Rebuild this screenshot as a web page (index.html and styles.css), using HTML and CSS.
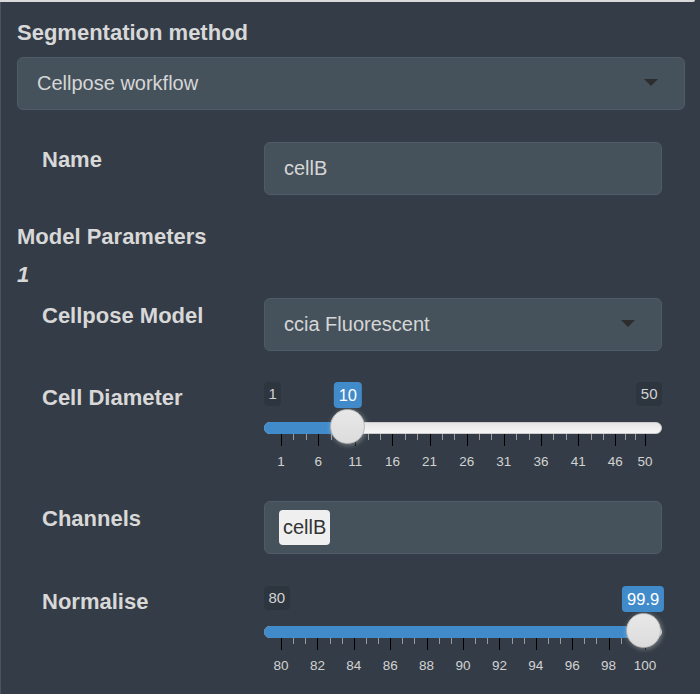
FILE: index.html
```html
<!DOCTYPE html>
<html lang="en">
<head>
<meta charset="utf-8">
<title>Segmentation method</title>
<link rel="stylesheet" href="styles.css">
</head>
<body>
<div class="topbar"></div>
<main class="panel">
  <div class="title">Segmentation method</div>
  <div class="select select-wide"><span>Cellpose workflow</span><span class="caret"></span></div>

  <div class="field field-name">
    <label class="field-label">Name</label>
    <div class="input"><span>cellB</span></div>
  </div>

  <div class="subtitle">Model Parameters</div>
  <div class="index">1</div>

  <div class="field field-model">
    <label class="field-label">Cellpose Model</label>
    <div class="select"><span>ccia Fluorescent</span><span class="caret"></span></div>
  </div>

  <div class="field field-gap">
    <label class="field-label">Cell Diameter</label>
    <div class="slider">
      <span class="irs-min">1</span>
      <span class="irs-max">50</span>
      <div class="irs-line"></div>
      <div class="irs-bar" style="width:83.86px"></div>
      <div class="rail">
        <i class="tick" style="left:0%"></i>
        <i class="tick minor" style="left:3.401%"></i>
        <i class="tick minor" style="left:6.803%"></i>
        <i class="tick" style="left:10.204%"></i>
        <i class="tick minor" style="left:13.605%"></i>
        <i class="tick minor" style="left:17.007%"></i>
        <i class="tick" style="left:20.408%"></i>
        <i class="tick minor" style="left:23.810%"></i>
        <i class="tick minor" style="left:27.211%"></i>
        <i class="tick" style="left:30.612%"></i>
        <i class="tick minor" style="left:34.014%"></i>
        <i class="tick minor" style="left:37.415%"></i>
        <i class="tick" style="left:40.816%"></i>
        <i class="tick minor" style="left:44.218%"></i>
        <i class="tick minor" style="left:47.619%"></i>
        <i class="tick" style="left:51.020%"></i>
        <i class="tick minor" style="left:54.422%"></i>
        <i class="tick minor" style="left:57.823%"></i>
        <i class="tick" style="left:61.224%"></i>
        <i class="tick minor" style="left:64.626%"></i>
        <i class="tick minor" style="left:68.027%"></i>
        <i class="tick" style="left:71.429%"></i>
        <i class="tick minor" style="left:74.830%"></i>
        <i class="tick minor" style="left:78.231%"></i>
        <i class="tick" style="left:81.633%"></i>
        <i class="tick minor" style="left:85.034%"></i>
        <i class="tick minor" style="left:88.435%"></i>
        <i class="tick" style="left:91.837%"></i>
        <i class="tick minor" style="left:94.558%"></i>
        <i class="tick minor" style="left:97.279%"></i>
        <i class="tick" style="left:100%"></i>
        <span class="tick-label" style="left:0%">1</span>
        <span class="tick-label" style="left:10.204%">6</span>
        <span class="tick-label" style="left:20.408%">11</span>
        <span class="tick-label" style="left:30.612%">16</span>
        <span class="tick-label" style="left:40.816%">21</span>
        <span class="tick-label" style="left:51.020%">26</span>
        <span class="tick-label" style="left:61.224%">31</span>
        <span class="tick-label" style="left:71.429%">36</span>
        <span class="tick-label" style="left:81.633%">41</span>
        <span class="tick-label" style="left:91.837%">46</span>
        <span class="tick-label" style="left:100%">50</span>
        <span class="handle" style="left:18.367%"></span>
        <span class="irs-single" style="left:18.367%">10</span>
      </div>
    </div>
  </div>

  <div class="field field-gap">
    <label class="field-label">Channels</label>
    <div class="input input-chips"><span class="chip">cellB</span></div>
  </div>

  <div class="field field-gap-last">
    <label class="field-label">Normalise</label>
    <div class="slider">
      <span class="irs-min">80</span>
      <div class="irs-line"></div>
      <div class="irs-bar" style="width:379.18px"></div>
      <div class="rail">
        <i class="tick" style="left:0%"></i>
        <i class="tick minor" style="left:3.333%"></i>
        <i class="tick minor" style="left:6.667%"></i>
        <i class="tick" style="left:10%"></i>
        <i class="tick minor" style="left:13.333%"></i>
        <i class="tick minor" style="left:16.667%"></i>
        <i class="tick" style="left:20%"></i>
        <i class="tick minor" style="left:23.333%"></i>
        <i class="tick minor" style="left:26.667%"></i>
        <i class="tick" style="left:30%"></i>
        <i class="tick minor" style="left:33.333%"></i>
        <i class="tick minor" style="left:36.667%"></i>
        <i class="tick" style="left:40%"></i>
        <i class="tick minor" style="left:43.333%"></i>
        <i class="tick minor" style="left:46.667%"></i>
        <i class="tick" style="left:50%"></i>
        <i class="tick minor" style="left:53.333%"></i>
        <i class="tick minor" style="left:56.667%"></i>
        <i class="tick" style="left:60%"></i>
        <i class="tick minor" style="left:63.333%"></i>
        <i class="tick minor" style="left:66.667%"></i>
        <i class="tick" style="left:70%"></i>
        <i class="tick minor" style="left:73.333%"></i>
        <i class="tick minor" style="left:76.667%"></i>
        <i class="tick" style="left:80%"></i>
        <i class="tick minor" style="left:83.333%"></i>
        <i class="tick minor" style="left:86.667%"></i>
        <i class="tick" style="left:90%"></i>
        <i class="tick minor" style="left:93.333%"></i>
        <i class="tick minor" style="left:96.667%"></i>
        <i class="tick" style="left:100%"></i>
        <span class="tick-label" style="left:0%">80</span>
        <span class="tick-label" style="left:10%">82</span>
        <span class="tick-label" style="left:20%">84</span>
        <span class="tick-label" style="left:30%">86</span>
        <span class="tick-label" style="left:40%">88</span>
        <span class="tick-label" style="left:50%">90</span>
        <span class="tick-label" style="left:60%">92</span>
        <span class="tick-label" style="left:70%">94</span>
        <span class="tick-label" style="left:80%">96</span>
        <span class="tick-label" style="left:90%">98</span>
        <span class="tick-label" style="left:100%">100</span>
        <span class="handle" style="left:99.5%"></span>
        <span class="irs-single" style="left:99.5%">99.9</span>
      </div>
    </div>
  </div>
</main>
</body>
</html>
```

FILE: styles.css
```css
* {
  box-sizing: border-box;
}

html,
body {
  margin: 0;
  padding: 0;
  height: 100%;
  overflow: hidden;
}

body {
  background: #343d47;
  font-family: "Liberation Sans", Arial, Helvetica, sans-serif;
  color: #d8d8d8;
  box-shadow: inset 1px 0 0 #4b555f;
}

.topbar {
  height: 2px;
  margin-right: 5px;
  background: #dadada;
  border-bottom-right-radius: 3px;
}

.panel {
  padding: 18px 15px 0 17px;
}

.title {
  font-weight: 700;
  font-size: 22px;
  line-height: 26px;
  margin-bottom: 11px;
}

.select,
.input {
  height: 53px;
  background: #45525c;
  border: 1px solid #4f5c67;
  border-radius: 6px;
  display: flex;
  align-items: center;
  padding: 0 19px;
  font-size: 20px;
  color: #d6d6d6;
}

.select {
  justify-content: space-between;
  padding-right: 26px;
}

.caret {
  width: 0;
  height: 0;
  margin-top: -2px;
  border-left: 7px solid transparent;
  border-right: 7px solid transparent;
  border-top: 7px solid #2d2d2d;
}

.field {
  display: grid;
  grid-template-columns: 222px 398px;
  align-items: start;
  margin-left: 25px;
}

.field-name {
  margin-top: 32px;
}

.field-model {
  margin-top: 11px;
}

.field-gap {
  margin-top: 29px;
}

.field-gap-last {
  margin-top: 30px;
}

.field-label {
  font-weight: 700;
  font-size: 22px;
  line-height: 25px;
  padding-top: 5px;
}

.subtitle {
  font-weight: 700;
  font-size: 22px;
  line-height: 25px;
  margin-top: 29px;
}

.index {
  font-weight: 700;
  font-style: italic;
  font-size: 22px;
  line-height: 25px;
  margin-top: 13px;
}

.input-chips {
  padding-left: 14px;
}

.chip {
  height: 35px;
  line-height: 35px;
  padding: 0 4px;
  background: #efefef;
  color: #333;
  border-radius: 4px;
  font-size: 20px;
}

/* slider */
.slider {
  position: relative;
  height: 92px;
}

.irs-min,
.irs-max {
  position: absolute;
  top: 2px;
  font-size: 15px;
  line-height: 20px;
  padding: 2px 4.5px;
  background: rgba(0, 0, 0, 0.12);
  border-radius: 4px;
  color: #d2d2d2;
}

.irs-min {
  left: 0;
}

.irs-max {
  right: 0;
}

.irs-line {
  position: absolute;
  left: 0;
  right: 0;
  top: 42px;
  height: 12px;
  border: 1px solid #cccccc;
  border-radius: 6px;
  background: linear-gradient(to bottom, #dddddd -50%, #ffffff 150%);
}

.irs-bar {
  position: absolute;
  left: 0;
  top: 42px;
  height: 12px;
  background: #428bca;
  border-radius: 6px 0 0 6px;
}

.rail {
  position: absolute;
  left: 17px;
  width: 364px;
  top: 0;
  bottom: 0;
}

.tick {
  position: absolute;
  top: 54px;
  width: 1px;
  height: 12px;
  background: #000;
}

.tick.minor {
  height: 6px;
  background: #999;
}

.tick-label {
  position: absolute;
  top: 74px;
  font-size: 13.5px;
  line-height: 16px;
  transform: translateX(-50%);
  color: #d2d2d2;
  white-space: nowrap;
}

.handle {
  position: absolute;
  top: 29px;
  width: 35px;
  height: 35px;
  margin-left: -17.5px;
  border-radius: 50%;
  border: 1px solid #b8b8b8;
  background: linear-gradient(to bottom, #e8e8e8 0%, #dcdcdc 100%);
  box-shadow: 1px 1px 5px rgba(255, 255, 255, 0.35);
}

.irs-single {
  position: absolute;
  top: 2px;
  transform: translateX(-50%);
  font-size: 16.5px;
  line-height: 22px;
  padding: 2px 5px;
  background: #428bca;
  color: #fff;
  border-radius: 4px;
  white-space: nowrap;
}
```
